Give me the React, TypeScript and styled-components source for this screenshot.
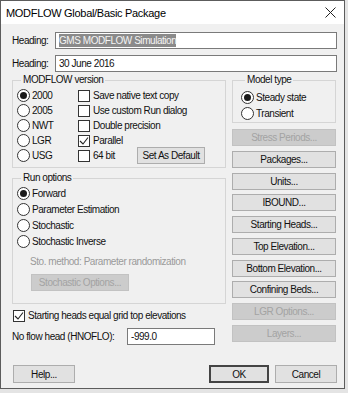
import styled, { createGlobalStyle } from "styled-components";

const GlobalStyle = createGlobalStyle`
  html, body {
    margin: 0;
    padding: 0;
    background: #e4e4e4;
  }
  body {
    width: 348px;
    height: 393px;
    overflow: hidden;
    font-family: "Liberation Sans", Arial, sans-serif;
    font-size: 10px;
    letter-spacing: -0.45px;
    color: #111;
  }
`;

const Window = styled.div`
  width: 345px;
  height: 389px;
  box-sizing: border-box;
  border: 1px solid #5c5c5c;
  background: #f0f0f0;
  display: flex;
  flex-direction: column;
`;

const TitleBar = styled.div`
  height: 23px;
  background: #ffffff;
  display: flex;
  align-items: center;
  justify-content: space-between;
  padding: 0 8px 0 5px;
`;

const Title = styled.span`
  font-size: 11px;
  letter-spacing: -0.3px;
  color: #000;
`;

const Client = styled.div`
  display: flex;
  flex-direction: column;
  padding: 8px 7px 0 11px;
`;

const HeadingRow = styled.div<{ $gap?: number }>`
  display: flex;
  align-items: center;
  height: 17px;
  margin-bottom: ${({ $gap }) => $gap ?? 0}px;
`;

const Label = styled.span<{ $width?: number }>`
  width: ${({ $width }) => ($width ? `${$width}px` : "auto")};
  flex-shrink: 0;
  white-space: nowrap;
`;

const TextBox = styled.div<{ $width?: number }>`
  box-sizing: border-box;
  height: 17px;
  flex: ${({ $width }) => ($width ? `0 0 ${$width}px` : "1")};
  background: #fff;
  border: 1px solid #7a7a7a;
  display: flex;
  align-items: center;
  padding: 0 3px;
  white-space: nowrap;
`;

const Selected = styled.span`
  background: #8a8a8a;
  color: #f4f4f4;
  line-height: 13px;
`;

const Main = styled.div`
  display: grid;
  grid-template-columns: 214px 104px;
  column-gap: 6px;
  margin-top: 2px;
`;

const Column = styled.div`
  display: flex;
  flex-direction: column;
`;

const Group = styled.fieldset<{ $pad: string; $top?: number }>`
  margin: ${({ $top }) => $top ?? 0}px 0 0 0;
  border: 1px solid #d5d5d5;
  border-radius: 0;
  padding: ${({ $pad }) => $pad};
  min-width: 0;
`;

const Legend = styled.legend`
  padding: 0 2px;
  margin-left: 4px;
  line-height: 12px;
`;

const VersionGrid = styled.div`
  display: grid;
  grid-template-columns: 61px 59px 1fr;
  grid-auto-rows: 15px;
`;

const Option = styled.label<{ $span?: boolean; $h?: number }>`
  display: flex;
  align-items: center;
  gap: 2px;
  height: ${({ $h }) => $h ?? 15}px;
  white-space: nowrap;
  grid-column: ${({ $span }) => ($span ? "span 2" : "auto")};
`;

const RadioDot = styled.span<{ $on?: boolean }>`
  width: 13px;
  height: 13px;
  box-sizing: border-box;
  border-radius: 50%;
  border: 1px solid #333;
  background: #fff;
  display: flex;
  align-items: center;
  justify-content: center;
  flex-shrink: 0;
  &::after {
    content: "";
    width: 7px;
    height: 7px;
    border-radius: 50%;
    background: ${({ $on }) => ($on ? "#1a1a1a" : "transparent")};
  }
`;

const Box = styled.span`
  width: 12px;
  height: 12px;
  box-sizing: border-box;
  border: 1px solid #333;
  background: #fff;
  display: flex;
  align-items: center;
  justify-content: center;
  flex-shrink: 0;
  margin-right: 1px;
`;

const Button = styled.div<{ $disabled?: boolean; $default?: boolean; $w?: number; $h?: number }>`
  box-sizing: border-box;
  height: ${({ $h }) => $h ?? 17}px;
  width: ${({ $w }) => ($w ? `${$w}px` : "auto")};
  background: ${({ $disabled }) => ($disabled ? "#cccccc" : "#e1e1e1")};
  border: 1px solid
    ${({ $disabled, $default }) =>
      $default ? "#444" : $disabled ? "#c2c2c2" : "#adadad"};
  box-shadow: ${({ $default }) => ($default ? "inset 0 0 0 1px #444" : "none")};
  color: ${({ $disabled }) => ($disabled ? "#a3a3a3" : "#111")};
  display: flex;
  align-items: center;
  justify-content: center;
  white-space: nowrap;
  flex-shrink: 0;
`;

const StoText = styled.div`
  color: #9a9a9a;
  padding-left: 13px;
  height: 14px;
  line-height: 14px;
  margin-top: 6px;
  white-space: nowrap;
`;

const StoButton = styled(Button)`
  margin: 5px 0 0 14px;
`;

const RunRows = styled.div`
  display: flex;
  flex-direction: column;
`;

const CheckRow = styled(Option)`
  margin-top: 4px;
  padding-left: 1px;
`;

const FlowRow = styled.div`
  display: flex;
  align-items: center;
  margin-top: 5px;
  height: 17px;
`;

const ButtonStack = styled.div`
  display: flex;
  flex-direction: column;
  gap: 4.75px;
  margin-top: 6px;
`;

const Footer = styled.div`
  display: flex;
  align-items: center;
  gap: 6px;
  margin-top: 20px;
  padding-left: 1px;
`;

const Spacer = styled.div`
  flex: 1;
`;

const Tick = () => (
  <svg width="10" height="10" viewBox="0 0 10 10">
    <path d="M1 5 L4 8 L9 1.5" fill="none" stroke="#222" strokeWidth="1.1" />
  </svg>
);

const Radio = ({ label, on, h }: { label: string; on?: boolean; h?: number }) => (
  <Option $h={h}>
    <RadioDot $on={on} />
    {label}
  </Option>
);

const Check = ({ label, on, span }: { label: string; on?: boolean; span?: boolean }) => (
  <Option $span={span}>
    <Box>{on && <Tick />}</Box>
    {label}
  </Option>
);

const sideButtons = [
  { label: "Stress Periods...", disabled: true },
  { label: "Packages..." },
  { label: "Units..." },
  { label: "IBOUND..." },
  { label: "Starting Heads..." },
  { label: "Top Elevation..." },
  { label: "Bottom Elevation..." },
  { label: "Confining Beds..." },
  { label: "LGR Options...", disabled: true },
  { label: "Layers...", disabled: true },
];

export default function App() {
  return (
    <>
      <GlobalStyle />
      <Window>
        <TitleBar>
          <Title>MODFLOW Global/Basic Package</Title>
          <svg width="11" height="11" viewBox="0 0 11 11">
            <path d="M0.5 0.5 L10.5 10.5 M10.5 0.5 L0.5 10.5" stroke="#222" strokeWidth="1" />
          </svg>
        </TitleBar>
        <Client>
          <HeadingRow $gap={6}>
            <Label $width={43}>Heading:</Label>
            <TextBox>
              <Selected>GMS MODFLOW Simulation</Selected>
            </TextBox>
          </HeadingRow>
          <HeadingRow>
            <Label $width={43}>Heading:</Label>
            <TextBox>30 June 2016</TextBox>
          </HeadingRow>
          <Main>
            <Column>
              <Group $pad="2px 4px 4px 4px">
                <Legend>MODFLOW version</Legend>
                <VersionGrid>
                  <Radio label="2000" on />
                  <Check label="Save native text copy" span />
                  <Radio label="2005" />
                  <Check label="Use custom Run dialog" span />
                  <Radio label="NWT" />
                  <Check label="Double precision" span />
                  <Radio label="LGR" />
                  <Check label="Parallel" on span />
                  <Radio label="USG" />
                  <Check label="64 bit" />
                  <Option>
                    <Button $w={68}>Set As Default</Button>
                  </Option>
                </VersionGrid>
              </Group>
              <Group $pad="1px 4px 12px 4px" $top={4}>
                <Legend>Run options</Legend>
                <RunRows>
                  <Radio label="Forward" on h={16} />
                  <Radio label="Parameter Estimation" h={16} />
                  <Radio label="Stochastic" h={16} />
                  <Radio label="Stochastic Inverse" h={16} />
                </RunRows>
                <StoText>Sto. method: Parameter randomization</StoText>
                <StoButton $disabled $w={98} $h={17}>
                  Stochastic Options...
                </StoButton>
              </Group>
              <CheckRow>
                <Box>
                  <Tick />
                </Box>
                Starting heads equal grid top elevations
              </CheckRow>
              <FlowRow>
                <Label $width={115}>No flow head (HNOFLO):</Label>
                <TextBox $width={88}>-999.0</TextBox>
              </FlowRow>
            </Column>
            <Column>
              <Group $pad="3px 8px 1px 8px">
                <Legend>Model type</Legend>
                <Radio label="Steady state" on h={16} />
                <Radio label="Transient" h={16} />
              </Group>
              <ButtonStack>
                {sideButtons.map((b) => (
                  <Button key={b.label} $disabled={b.disabled}>
                    {b.label}
                  </Button>
                ))}
              </ButtonStack>
            </Column>
          </Main>
          <Footer>
            <Button $w={62} $h={18}>Help...</Button>
            <Spacer />
            <Button $w={60} $h={18} $default>OK</Button>
            <Button $w={62} $h={18}>Cancel</Button>
          </Footer>
        </Client>
      </Window>
    </>
  );
}
